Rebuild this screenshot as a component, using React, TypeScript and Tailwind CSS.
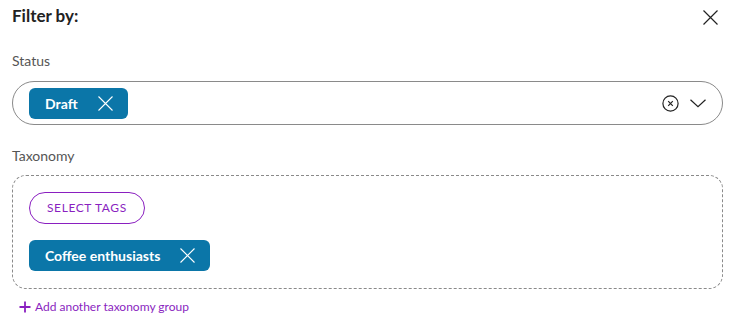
function Cross({ size = 15, stroke = 'currentColor', width = 1.2 }: { size?: number; stroke?: string; width?: number }) {
  return (
    <svg width={size} height={size} viewBox={`0 0 ${size} ${size}`} fill="none" stroke={stroke} strokeWidth={width}>
      <path d={`M0.5 0.5L${size - 0.5} ${size - 0.5}M${size - 0.5} 0.5L0.5 ${size - 0.5}`} />
    </svg>
  );
}

function Chip({ label }: { label: string }) {
  return (
    <span className="inline-flex h-[31px] items-center gap-[20px] rounded-[6px] bg-[#0b76a8] pl-[16px] pr-[15px] text-[14px] font-bold text-white">
      {label}
      <Cross size={15} width={1.1} />
    </span>
  );
}

function ClearIcon() {
  return (
    <svg width="17" height="17" viewBox="0 0 17 17" fill="none" stroke="#222" strokeWidth="1.2">
      <circle cx="8.5" cy="8.5" r="7.6" />
      <path d="M6.2 6.2l4.6 4.6M10.8 6.2l-4.6 4.6" />
    </svg>
  );
}

function Chevron() {
  return (
    <svg width="16" height="9" viewBox="0 0 16 9" fill="none" stroke="#222" strokeWidth="1.2">
      <path d="M0.5 0.8L8 7.8L15.5 0.8" />
    </svg>
  );
}

export default function App() {
  return (
    <div className="w-[731px] h-[328px] bg-white pl-[12px] pr-[8px] pt-[5px] font-['Lato',sans-serif] text-[#222]">
      <div className="flex h-[22px] items-center justify-between">
        <h2 className="text-[17px] font-bold leading-[22px]">Filter by:</h2>
        <span className="mr-[5px] mt-[3px]">
          <Cross size={15} stroke="#222" width={1.2} />
        </span>
      </div>

      <div className="mt-[23px] text-[14px] text-[#555]">Status</div>
      <div className="mt-[10px] flex h-[44px] items-center rounded-full border border-[#8a8a8a] pl-[16px] pr-[16px]">
        <Chip label="Draft" />
        <div className="ml-auto flex items-center gap-[11px]">
          <ClearIcon />
          <Chevron />
        </div>
      </div>

      <div className="mt-[20px] text-[14px] text-[#555]">Taxonomy</div>
      <div className="mt-[9px] flex h-[114px] flex-col items-start gap-[16px] rounded-[14px] border border-dashed border-[#8a8a8a] px-[16px] pt-[16px]">
        <button className="h-[32px] rounded-full border border-[#8a1fc0] px-[17px] text-[12px] tracking-[0.05em] text-[#8a1fc0]">
          SELECT TAGS
        </button>
        <Chip label="Coffee enthusiasts" />
      </div>

      <div className="mt-[9px] ml-[7px] flex items-center gap-[4px] text-[12px] text-[#8a1fc0]">
        <svg width="12" height="12" viewBox="0 0 12 12" fill="none" stroke="#8a1fc0" strokeWidth="1.8">
          <path d="M6 0.5V11.5M0.5 6H11.5" />
        </svg>
        Add another taxonomy group
      </div>
    </div>
  );
}
